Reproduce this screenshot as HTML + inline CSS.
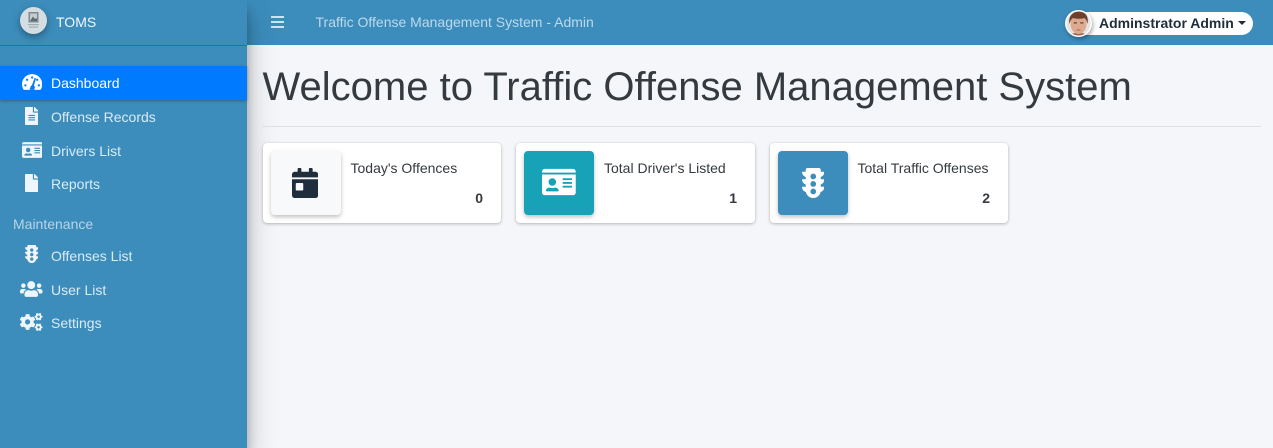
<!DOCTYPE html>
<html lang="en"><head><meta charset="utf-8"><title>TOMS</title>
<style>
*{box-sizing:border-box}
html,body{margin:0;padding:0}
body{width:1273px;height:448px;overflow:hidden;position:relative;background:#f4f6f9;font-family:"Liberation Sans",sans-serif;color:#343a40;font-size:14px}
.abs{position:absolute}
#top{left:247px;top:0;width:1026px;height:45px;background:#3c8dbc}
#side{left:0;top:0;width:247px;height:448px;background:#3c8dbc;box-shadow:0 14px 28px rgba(0,0,0,.25),0 10px 10px rgba(0,0,0,.22)}
#brandline{left:0;top:45px;width:247px;height:1px;background:#3f6a83}
.t{position:absolute;white-space:nowrap;line-height:20px}
.nav{left:51px;color:#d9ecf7}
.ic{position:absolute;fill:#eef5fb}
#active{left:0;top:66px;width:247px;height:34px;background:#007bff;box-shadow:0 1px 3px rgba(0,0,0,.3)}
.card{position:absolute;top:143px;height:80px;background:#fff;border-radius:4px;box-shadow:0 0 1px rgba(0,0,0,.125),0 1px 3px rgba(0,0,0,.25)}
.box{position:absolute;left:8px;top:8px;width:70px;height:64px;border-radius:4px;box-shadow:0 2px 4px rgba(0,0,0,.25)}
.lbl{position:absolute;left:87.5px;top:15px;line-height:20px;white-space:nowrap;color:#343a40}
.val{position:absolute;right:18px;top:45px;line-height:20px;font-weight:700;color:#343a40}
</style></head><body>
<div id="top" class="abs"></div>
<div class="abs" style="left:271px;top:16px;width:13px;height:2px;background:#cfe3f0"></div>
<div class="abs" style="left:271px;top:21px;width:13px;height:2px;background:#cfe3f0"></div>
<div class="abs" style="left:271px;top:26px;width:13px;height:2px;background:#cfe3f0"></div>
<div class="t" style="left:315.500px;top:12px;color:#bcd9ec">Traffic Offense Management System - Admin</div>

<div class="abs" style="left:1066px;top:12px;width:187px;height:23px;border-radius:12px;background:#fff"></div>
<svg class="abs" style="left:1065px;top:10px;filter:drop-shadow(1px 2px 2px rgba(0,0,0,.35))" width="27" height="27" viewBox="0 0 27 27">
<circle cx="13.500" cy="13.500" r="13.500" fill="#fff"/>
<clipPath id="c"><circle cx="13.500" cy="13.500" r="12"/></clipPath>
<g clip-path="url(#c)"><rect width="27" height="27" fill="#e4e4e4"/>
<path d="M3 27c1-3 5-4 10.500-4s9.500 1 10.500 4z" fill="#9a5f4c"/>
<ellipse cx="13.500" cy="14" rx="8" ry="10" fill="#dda98f"/>
<path d="M4.500 14C3 6 8 1.500 14 1.500S24 6 22.500 14c-.8-3-1.500-5-3-6-3 1-8 1-11.500 0-1.800 1-2.700 3-3.500 6z" fill="#6d3f2c"/>
<rect x="8.800" y="12.300" width="3" height="1.200" fill="#5a3a2c"/><rect x="15.300" y="12.300" width="3" height="1.200" fill="#5a3a2c"/>
<rect x="11.500" y="19.500" width="4" height="1" fill="#a8604f"/></g></svg>
<div class="t" style="left:1099px;top:13px;font-weight:700;color:#1f2d3d">Adminstrator Admin</div>
<div class="abs" style="left:1238px;top:21px;width:0;height:0;border-left:4px solid transparent;border-right:4px solid transparent;border-top:4px solid #1f2d3d"></div>

<div id="side" class="abs"></div>
<div id="brandline" class="abs"></div>
<svg class="abs" style="left:20px;top:7px;filter:drop-shadow(0 3px 4px rgba(0,0,0,.35))" width="27" height="27" viewBox="0 0 27 27">
<circle cx="13.500" cy="13.500" r="13.500" fill="#d3dde2"/>
<rect x="8.500" y="5" width="10" height="10.500" fill="#7f8a90"/><path d="M10 6.500h7v7.500h-7z" fill="#c2ccd1"/><path d="M10 14l3-4.500 2 2.500 2-1v3z" fill="#5f6a70"/>
<rect x="8" y="17" width="11" height="1.200" fill="#a2adb3"/><rect x="9" y="19.500" width="9" height="1.200" fill="#a2adb3"/>
</svg>
<div class="t" style="left:56px;top:12px;color:#f2f7fb">TOMS</div>

<div id="active" class="abs"></div>
<svg class="ic" style="left:21.500px;top:73px;fill:#fff" width="20.250" height="18" viewBox="0 0 576 512">
<path d="M288 32C128.940 32 0 160.940 0 320c0 52.800 14.250 102.260 39.060 144.800 5.610 9.620 16.300 15.200 27.440 15.200h443c11.140 0 21.830-5.580 27.440-15.200C561.750 422.260 576 372.800 576 320c0-159.060-128.940-288-288-288z"/>
<g fill="#007bff"><circle cx="288" cy="128" r="32"/><circle cx="144" cy="192" r="32"/><circle cx="96" cy="352" r="32"/><circle cx="480" cy="352" r="32"/><circle cx="432" cy="192" r="32"/>
<path d="M360 140l38 12-58 205a64 64 0 1 1-58-10z"/><rect x="222" y="430" width="132" height="50"/></g>
</svg>
<div class="t" style="left:51px;top:73px;color:#fff">Dashboard</div>

<svg class="ic" style="left:24.500px;top:107px" width="13.500" height="18" viewBox="0 0 384 512">
<path d="M224 136V0H24C10.700 0 0 10.700 0 24v464c0 13.300 10.700 24 24 24h336c13.300 0 24-10.700 24-24V160H248c-13.200 0-24-10.800-24-24zm64 236c0 6.600-5.400 12-12 12H108c-6.600 0-12-5.400-12-12v-8c0-6.600 5.400-12 12-12h168c6.600 0 12 5.400 12 12v8zm0-64c0 6.600-5.400 12-12 12H108c-6.600 0-12-5.400-12-12v-8c0-6.600 5.400-12 12-12h168c6.600 0 12 5.400 12 12v8zm0-72v8c0 6.600-5.400 12-12 12H108c-6.600 0-12-5.400-12-12v-8c0-6.600 5.400-12 12-12h168c6.600 0 12 5.400 12 12zm96-114.100v6.100H256V0h6.100c6.400 0 12.500 2.500 17 7l97.900 98c4.500 4.500 7 10.600 7 16.900z"/>
</svg>
<div class="t nav" style="top:107px">Offense Records</div>

<svg class="ic" style="left:21.500px;top:140.500px" width="20.250" height="18" viewBox="0 0 576 512">
<path d="M528 32H48C21.500 32 0 53.500 0 80v16h576V80c0-26.500-21.500-48-48-48zM0 432c0 26.500 21.500 48 48 48h480c26.500 0 48-21.500 48-48V128H0v304zm352-232c0-4.400 3.600-8 8-8h144c4.400 0 8 3.600 8 8v16c0 4.400-3.600 8-8 8H360c-4.400 0-8-3.600-8-8v-16zm0 64c0-4.400 3.600-8 8-8h144c4.400 0 8 3.600 8 8v16c0 4.400-3.600 8-8 8H360c-4.400 0-8-3.600-8-8v-16zm0 64c0-4.400 3.600-8 8-8h144c4.400 0 8 3.600 8 8v16c0 4.400-3.600 8-8 8H360c-4.400 0-8-3.600-8-8v-16zM176 192c35.300 0 64 28.700 64 64s-28.700 64-64 64-64-28.700-64-64 28.700-64 64-64zM67.100 396.200C75.500 370.500 99.600 352 128 352h8.200c12.300 5.100 25.700 8 39.800 8s27.600-2.900 39.800-8h8.200c28.400 0 52.500 18.500 60.900 44.200 3.200 9.900-5.200 19.800-15.600 19.800H82.700c-10.400 0-18.800-10-15.600-19.800z"/>
</svg>
<div class="t nav" style="top:141px">Drivers List</div>

<svg class="ic" style="left:24.500px;top:173.500px" width="13.500" height="18" viewBox="0 0 384 512">
<path d="M224 136V0H24C10.700 0 0 10.700 0 24v464c0 13.300 10.700 24 24 24h336c13.300 0 24-10.700 24-24V160H248c-13.200 0-24-10.800-24-24zm160-14.100v6.100H256V0h6.100c6.400 0 12.500 2.500 17 7l97.900 98c4.500 4.500 7 10.600 7 16.900z"/>
</svg>
<div class="t nav" style="top:174px">Reports</div>

<div class="t" style="left:13px;top:214px;color:#b9d3e4">Maintenance</div>

<svg class="ic" style="left:24.500px;top:245px" width="13.500" height="18" viewBox="0 0 384 512">
<path d="M384 192h-64v-37.880c37.200-13.220 64-48.380 64-90.120h-64V32c0-17.670-14.330-32-32-32H96C78.330 0 64 14.330 64 32v32H0c0 41.740 26.800 76.900 64 90.120V192H0c0 41.740 26.800 76.900 64 90.120V320H0c0 42.840 28.250 78.690 66.990 91.050C79.420 468.720 130.600 512 192 512s112.580-43.280 125.010-100.950C355.750 398.690 384 362.840 384 320h-64v-37.880c37.200-13.220 64-48.380 64-90.120zM192 448c-26.510 0-48-21.490-48-48s21.490-48 48-48 48 21.490 48 48-21.490 48-48 48zm0-128c-26.510 0-48-21.490-48-48s21.490-48 48-48 48 21.490 48 48-21.490 48-48 48zm0-128c-26.510 0-48-21.490-48-48s21.490-48 48-48 48 21.490 48 48-21.490 48-48 48z"/>
</svg>
<div class="t nav" style="top:246px">Offenses List</div>

<svg class="ic" style="left:20.300px;top:280px" width="22.500" height="18" viewBox="0 0 640 512">
<path d="M96 224c35.300 0 64-28.700 64-64s-28.700-64-64-64-64 28.700-64 64 28.700 64 64 64zm448 0c35.300 0 64-28.700 64-64s-28.700-64-64-64-64 28.700-64 64 28.700 64 64 64zm32 32h-64c-17.600 0-33.500 7.100-45.100 18.600 40.300 22.100 68.900 62 75.100 109.400h66c17.700 0 32-14.300 32-32v-32c0-35.300-28.700-64-64-64zm-256 0c61.900 0 112-50.100 112-112S381.900 32 320 32 208 82.100 208 144s50.100 112 112 112zm76.800 32h-8.300c-20.800 10-43.900 16-68.500 16s-47.600-6-68.500-16h-8.300C179.600 288 128 339.600 128 403.200V432c0 26.500 21.500 48 48 48h288c26.500 0 48-21.500 48-48v-28.800c0-63.600-51.600-115.200-115.200-115.200zm-223.700-13.400C161.500 263.100 145.600 256 128 256H64c-35.300 0-64 28.700-64 64v32c0 17.700 14.300 32 32 32h65.900c6.300-47.400 34.900-87.300 75.200-109.400z"/>
</svg>
<div class="t nav" style="top:280px">User List</div>

<svg class="ic" style="left:20.300px;top:312.500px" width="22.500" height="18" viewBox="0 0 640 512">
<path d="M512.100 191l-8.200 14.300c-3 5.300-9.400 7.500-15.100 5.400-11.800-4.400-22.600-10.700-32.100-18.600-4.600-3.800-5.800-10.500-2.800-15.700l8.200-14.300c-6.900-8-12.300-17.300-15.900-27.400h-16.500c-6 0-11.200-4.300-12.200-10.300-2-12-2.100-24.600 0-37.100 1-6 6.200-10.400 12.200-10.400h16.500c3.600-10.100 9-19.400 15.900-27.400l-8.200-14.300c-3-5.200-1.900-11.900 2.800-15.700 9.500-7.900 20.400-14.200 32.100-18.600 5.700-2.100 12.100.1 15.100 5.400l8.200 14.300c10.500-1.900 21.200-1.900 31.700 0L552 6.300c3-5.300 9.400-7.500 15.100-5.400 11.800 4.400 22.600 10.700 32.100 18.600 4.600 3.800 5.800 10.500 2.800 15.700l-8.200 14.300c6.900 8 12.300 17.300 15.900 27.400h16.500c6 0 11.200 4.300 12.200 10.300 2 12 2.100 24.600 0 37.100-1 6-6.200 10.400-12.200 10.400h-16.500c-3.600 10.100-9 19.400-15.900 27.400l8.200 14.300c3 5.200 1.900 11.900-2.800 15.700-9.500 7.900-20.400 14.200-32.100 18.600-5.700 2.100-12.100-.1-15.100-5.400l-8.200-14.300c-10.400 1.900-21.200 1.900-31.700 0zm-10.500-58.800c38.500 29.600 82.400-14.300 52.800-52.800-38.500-29.700-82.400 14.300-52.800 52.800zM386.300 286.100l33.700 16.800c10.100 5.800 14.500 18.100 10.500 29.100-8.900 24.200-26.400 46.400-42.600 65.800-7.400 8.900-20.200 11.100-30.300 5.300l-29.100-16.800c-16 13.700-34.600 24.600-54.900 31.700v33.600c0 11.600-8.300 21.600-19.700 23.600-24.600 4.200-50.400 4.400-75.900 0-11.500-2-20-11.900-20-23.600V418c-20.300-7.200-38.900-18-54.900-31.700L74 403c-10 5.800-22.900 3.600-30.300-5.300-16.200-19.400-33.300-41.600-42.200-65.700-4-10.900.4-23.200 10.500-29.100l33.300-16.800c-3.900-20.900-3.900-42.400 0-63.400L12 205.800c-10.100-5.800-14.600-18.100-10.500-29 8.900-24.200 26-46.400 42.200-65.800 7.400-8.900 20.200-11.100 30.300-5.300l29.100 16.800c16-13.700 34.600-24.600 54.900-31.700V57.100c0-11.500 8.200-21.500 19.600-23.500 24.600-4.200 50.500-4.400 76-.1 11.500 2 20 11.900 20 23.600v33.600c20.300 7.200 38.900 18 54.900 31.700l29.100-16.800c10-5.800 22.900-3.600 30.300 5.300 16.200 19.400 33.200 41.600 42.100 65.800 4 10.900.1 23.200-10 29.100l-33.700 16.800c3.900 21 3.900 42.500 0 63.500zm-117.600 21.100c59.200-77-28.700-164.900-105.700-105.700-59.200 77 28.700 164.900 105.700 105.700zm243.400 182.700l-8.200 14.300c-3 5.300-9.400 7.500-15.100 5.400-11.800-4.400-22.600-10.700-32.100-18.600-4.600-3.800-5.800-10.500-2.800-15.700l8.200-14.300c-6.900-8-12.300-17.300-15.900-27.400h-16.500c-6 0-11.200-4.300-12.200-10.300-2-12-2.100-24.600 0-37.100 1-6 6.200-10.400 12.200-10.400h16.500c3.600-10.100 9-19.400 15.900-27.400l-8.200-14.300c-3-5.200-1.900-11.900 2.800-15.700 9.500-7.900 20.400-14.200 32.100-18.600 5.700-2.100 12.100.1 15.100 5.400l8.200 14.300c10.500-1.900 21.200-1.900 31.700 0l8.200-14.300c3-5.300 9.400-7.500 15.100-5.400 11.800 4.400 22.600 10.700 32.100 18.600 4.600 3.800 5.800 10.500 2.800 15.700l-8.200 14.300c6.900 8 12.300 17.300 15.900 27.400h16.500c6 0 11.200 4.300 12.200 10.300 2 12 2.100 24.600 0 37.100-1 6-6.200 10.400-12.200 10.400h-16.500c-3.600 10.100-9 19.400-15.900 27.400l8.200 14.300c3 5.200 1.900 11.900-2.800 15.700-9.500 7.900-20.400 14.200-32.100 18.600-5.700 2.100-12.100-.1-15.100-5.400l-8.200-14.300c-10.400 1.900-21.200 1.900-31.700 0zM501.600 431c38.500 29.600 82.400-14.300 52.800-52.800-38.500-29.600-82.400 14.300-52.800 52.800z"/>
</svg>
<div class="t nav" style="top:313px">Settings</div>

<div class="t" style="left:262.500px;top:63px;font-size:40px;line-height:48px;color:#343a40">Welcome to Traffic Offense Management System</div>
<div class="abs" style="left:262px;top:126px;width:999px;height:1px;background:#dee0e3"></div>

<div class="card" style="left:263px;width:238px">
<div class="box" style="background:#f8f9fa"><svg class="abs" style="left:21px;top:17px;fill:#1f2d3d" width="26.250" height="30" viewBox="0 0 448 512">
<path d="M0 464c0 26.500 21.500 48 48 48h352c26.500 0 48-21.500 48-48V192H0v272zm64-192c0-8.800 7.200-16 16-16h96c8.800 0 16 7.200 16 16v96c0 8.800-7.200 16-16 16H80c-8.800 0-16-7.200-16-16v-96zM400 64h-48V16c0-8.800-7.200-16-16-16h-32c-8.800 0-16 7.200-16 16v48H160V16c0-8.800-7.200-16-16-16h-32c-8.800 0-16 7.200-16 16v48H48C21.500 64 0 85.500 0 112v48h448v-48c0-26.500-21.500-48-48-48z"/></svg></div>
<div class="lbl">Today's Offences</div><div class="val">0</div></div>

<div class="card" style="left:516px;width:239px">
<div class="box" style="background:#17a2b8"><svg class="abs" style="left:18px;top:16px;fill:#fff" width="33.750" height="30" viewBox="0 0 576 512">
<path d="M528 32H48C21.500 32 0 53.500 0 80v16h576V80c0-26.500-21.500-48-48-48zM0 432c0 26.500 21.500 48 48 48h480c26.500 0 48-21.500 48-48V128H0v304zm352-232c0-4.400 3.600-8 8-8h144c4.400 0 8 3.600 8 8v16c0 4.400-3.600 8-8 8H360c-4.400 0-8-3.600-8-8v-16zm0 64c0-4.400 3.600-8 8-8h144c4.400 0 8 3.600 8 8v16c0 4.400-3.600 8-8 8H360c-4.400 0-8-3.600-8-8v-16zm0 64c0-4.400 3.600-8 8-8h144c4.400 0 8 3.600 8 8v16c0 4.400-3.600 8-8 8H360c-4.400 0-8-3.600-8-8v-16zM176 192c35.300 0 64 28.700 64 64s-28.700 64-64 64-64-28.700-64-64 28.700-64 64-64zM67.100 396.200C75.500 370.500 99.600 352 128 352h8.200c12.300 5.100 25.700 8 39.800 8s27.600-2.900 39.800-8h8.200c28.400 0 52.500 18.500 60.900 44.200 3.200 9.900-5.200 19.800-15.600 19.800H82.700c-10.400 0-18.800-10-15.600-19.800z"/></svg></div>
<div class="lbl" style="left:88px">Total Driver's Listed</div><div class="val">1</div></div>

<div class="card" style="left:770px;width:238px">
<div class="box" style="background:#3c8dbc"><svg class="abs" style="left:23.500px;top:17px;fill:#fff" width="22.500" height="30" viewBox="0 0 384 512">
<path d="M384 192h-64v-37.880c37.200-13.220 64-48.380 64-90.120h-64V32c0-17.670-14.330-32-32-32H96C78.330 0 64 14.330 64 32v32H0c0 41.740 26.800 76.900 64 90.120V192H0c0 41.740 26.800 76.900 64 90.120V320H0c0 42.840 28.250 78.690 66.990 91.050C79.420 468.720 130.600 512 192 512s112.580-43.280 125.010-100.950C355.750 398.690 384 362.840 384 320h-64v-37.880c37.200-13.220 64-48.380 64-90.120zM192 448c-26.510 0-48-21.490-48-48s21.490-48 48-48 48 21.490 48 48-21.490 48-48 48zm0-128c-26.510 0-48-21.490-48-48s21.490-48 48-48 48 21.490 48 48-21.490 48-48 48zm0-128c-26.510 0-48-21.490-48-48s21.490-48 48-48 48 21.490 48 48-21.490 48-48 48z"/></svg></div>
<div class="lbl">Total Traffic Offenses</div><div class="val">2</div></div>
</body></html>
